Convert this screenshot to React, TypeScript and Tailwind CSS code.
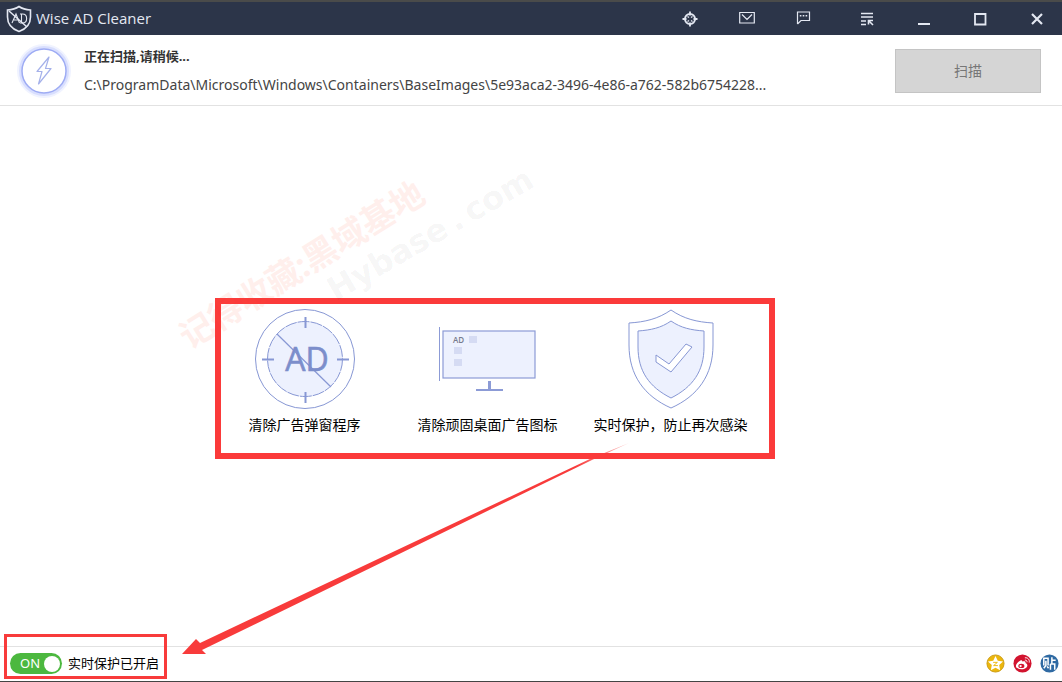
import React, { useState } from "react";

const cjk = "font-['Noto_Sans','Noto_Sans_CJK_SC',sans-serif]";

function ShieldLogo() {
  return (
    <svg viewBox="0 0 26 28" className="h-7 w-[26px]" fill="none" stroke="#e4e8f2" strokeWidth="1.6" aria-hidden="true">
      <path d="M13 1.5C9.500 4 5.500 4.800 1.500 5v7c0 7 4.500 12 11.500 14.500C20 24 24.500 19 24.500 12V5C20.500 4.800 16.500 4 13 1.500Z" />
      <path d="M3 6l18 16" strokeWidth="1.500" />
      <path d="M6 18l4-9 3.500 9M8 15h4.500M15.500 9v9M14 9h2.500c5.500 0 5.500 9 0 9H14" strokeWidth="1.100" />
    </svg>
  );
}

function ScanBadge() {
  return (
    <svg viewBox="0 0 56 56" className="h-14 w-14 shrink-0" fill="none" aria-hidden="true">
      <circle cx="28" cy="28" r="25.500" stroke="#f0f3ff" strokeWidth="3" />
      <circle cx="28" cy="28" r="23.500" stroke="#d9dffe" strokeWidth="3" />
      <circle cx="28" cy="28" r="22" fill="#fff" stroke="#9eacf4" strokeWidth="1.500" />
      <path d="M33 14L21 28.500h5L22.500 41 35 25.500h-5.500L33 14Z" stroke="#a5b1ea" strokeWidth="1.200" strokeLinejoin="round" />
    </svg>
  );
}

const titleIcons: { name: string; width: string; art: React.ReactNode }[] = [
  {
    name: "皮肤",
    width: "w-[57px]",
    art: (
      <>
        <circle cx="8" cy="8" r="5" strokeWidth="2" />
        <path d="M5.500 5.500l1.500 1M10.500 5.500l-1.500 1M5.500 10.500l1.500-1M10.500 10.500l-1.500-1" strokeWidth="1.400" />
        <path d="M8 0.500v4M8 11.500v4M0.500 8h4M11.500 8h4" strokeWidth="1.800" />
      </>
    ),
  },
  {
    name: "邮件",
    width: "w-[57px]",
    art: <path d="M0.700 1.500h14.600v10.500H0.700ZM3 3.500l5 5 5-5" />,
  },
  {
    name: "反馈",
    width: "w-[57px]",
    art: (
      <>
        <path d="M1.500 13V1h12v8.500H5L1.500 13" />
        <path d="M3.800 4.800h1.600M6.700 4.800h1.600M9.600 4.800h1.600" strokeWidth="1.600" />
      </>
    ),
  },
  {
    name: "菜单",
    width: "w-[70px]",
    art: (
      <>
        <path d="M2 2.500h12M2 6h12M2 10h5M2 13.500h5" strokeWidth="1.400" />
        <path d="M9.500 13.500V9.500H14M10 10l4 4" strokeWidth="1.600" />
      </>
    ),
  },
  { name: "最小化", width: "w-[44px]", art: <path d="M2 13h12" strokeWidth="2" /> },
  { name: "最大化", width: "w-[68px]", art: <path d="M3 3h10.500v10.500H3Z" strokeWidth="1.800" /> },
  { name: "关闭", width: "w-[46px]", art: <path d="M3 3l10 10M13 3L3 13" strokeWidth="2.200" /> },
];

function TargetArt() {
  return (
    <svg viewBox="0 0 100 100" className="h-[100px] w-[100px]" fill="none" stroke="#8797d4" aria-hidden="true">
      <circle cx="50" cy="50" r="49.500" />
      <circle cx="50" cy="50" r="37.500" fill="#edf1fe" strokeDasharray="12 1" />
      <path d="M22 25l54 53" strokeWidth="1.200" />
      <path d="M50.500 8v11M50.500 83v11M7 50.500h12M82 50.500h12" strokeWidth="2" />
      <text x="52" y="62" textAnchor="middle" fontSize="32" fill="#7c8ecb" stroke="#7c8ecb" strokeWidth="0.600" className="font-['Open_Sans',sans-serif]">AD</text>
    </svg>
  );
}

function MonitorArt() {
  return (
    <svg viewBox="0 0 100 100" className="h-[100px] w-[100px]" fill="none" stroke="#8c9bd6" aria-hidden="true">
      <path d="M1.500 18v54" />
      <rect x="5" y="22" width="92" height="47" fill="#edf1fe" strokeWidth="1.200" />
      <path d="M51.500 72v9" strokeWidth="3" />
      <path d="M38 81h27" strokeWidth="2" />
      <path d="M31 27h8v7h-8ZM16 38h8v7h-8ZM16 50h8v7h-8Z" fill="#d5dbf3" stroke="none" />
      <text x="15" y="34" fontSize="8" fontWeight="600" fill="#777b8d" stroke="none" className="font-['Open_Sans',sans-serif]">AD</text>
    </svg>
  );
}

function ShieldArt() {
  return (
    <svg viewBox="0 0 100 100" className="h-[100px] w-[100px]" fill="none" stroke="#8797d4" aria-hidden="true">
      <path d="M50 1C37 10 24 13 8 14v22c0 30 15 51 42 63 27-12 42-33 42-63V14C76 13 63 10 50 1Z" />
      <path d="M50 12C40 19 30 21 17 22v16c0 24 11 40 33 51 22-11 33-27 33-51V22C70 21 60 19 50 12Z" fill="#edf1fe" />
      <path d="M35 46v7l15 10 21-25-6-3-17 20-13-9Z" fill="#fff" strokeLinejoin="round" />
    </svg>
  );
}

const features = [
  { label: "清除广告弹窗程序", art: <TargetArt /> },
  { label: "清除顽固桌面广告图标", art: <MonitorArt /> },
  { label: "实时保护，防止再次感染", art: <ShieldArt /> },
];

const shares = [
  {
    name: "QQ空间",
    art: (
      <>
        <circle cx="10" cy="10" r="9" fill="#ecb70d" stroke="#c99a13" strokeWidth="1" />
        <path d="M10 2.200l2.400 5 5.500.7-4 3.800 1 5.500L10 14.500l-4.900 2.700 1-5.500-4-3.800 5.500-.7Z" fill="#fff" />
        <path d="M7.500 8.800h4.500L8 12.200h4.500" fill="none" stroke="#ecb70d" />
      </>
    ),
  },
  {
    name: "微博",
    art: (
      <>
        <circle cx="10" cy="10" r="9.500" fill="#d2142f" />
        <path d="M7.500 7c1.500-.8 2.500-.2 2.200 1 2.500-.9 4 0 3.400 1.500 4 1.600 1.700 6.500-4 6.500-8 0-7.500-5.500-1.600-9Z" fill="#fff" />
        <ellipse cx="8.800" cy="12.500" rx="3.200" ry="2.300" fill="#d2142f" />
        <circle cx="8" cy="12.700" r="1.200" fill="#fff" />
        <path d="M12.500 6.500c1.500-.3 2.500.7 2.200 2.200M12.500 4c3.200-.4 5.200 2 4.600 5" fill="none" stroke="#fff" />
      </>
    ),
  },
  {
    name: "贴吧",
    art: (
      <>
        <circle cx="10" cy="10" r="9.500" fill="#2f6aa3" />
        <path d="M4 12V4.500h4.500V12M6.200 7v5l-2.200 3M7.500 13l1.500 2M12.500 3.500v7M12.500 6.500h4M11 10.500h4.500v6M11 10.500v6" fill="none" stroke="#fff" strokeWidth="1.600" />
      </>
    ),
  },
];

export default function App() {
  const [on, setOn] = useState(true);
  return (
    <div className={`relative flex min-h-screen flex-col overflow-hidden bg-white text-sm text-black ${cjk}`}>
      <header className="flex h-[35px] items-center border-t-2 border-[#4a4b4a] bg-[#2c3549] pr-[2px] pl-[6px] text-[#e4e8f2]">
        <ShieldLogo />
        <h1 className="ml-1 flex-1 font-['Open_Sans',sans-serif] text-[15px]">Wise AD Cleaner</h1>
        <nav className="flex">
          {titleIcons.map((i) => (
            <button key={i.name} aria-label={i.name} className={`flex h-8 items-center justify-center ${i.width}`}>
              <svg viewBox="0 0 16 16" className="h-4 w-4" fill="none" stroke="currentColor" strokeWidth="1.200" aria-hidden="true">
                {i.art}
              </svg>
            </button>
          ))}
        </nav>
      </header>

      <section className="flex h-[71px] items-center border-b border-[#e2e2e2] pt-[2px] pr-[21px] pl-4 text-[#444]">
        <ScanBadge />
        <div className="ml-3 min-w-0 flex-1">
          <p className="text-[13px] leading-7 font-bold text-[#333]">正在扫描,请稍候...</p>
          <p className="truncate text-sm leading-[30px]">
            C:\ProgramData\Microsoft\Windows\Containers\BaseImages\5e93aca2-3496-4e86-a762-582b6754228...
          </p>
        </div>
        <button className="h-11 w-[146px] border border-[#c4c4c4] bg-[#d5d5d5] text-sm text-[#777]">扫描</button>
      </section>

      <main className="flex-1 pt-[203px] pl-[213px]">
        <div className="relative w-[549px]">
          <div className="pointer-events-none absolute -top-[11px] left-[2px] h-[161px] w-[560px] border-[6px] border-[#fb3a3a]" />
          <ul className="grid grid-cols-3">
            {features.map((f) => (
              <li key={f.label} className="flex flex-col items-center gap-1">
                {f.art}
                <span className="text-sm leading-6 whitespace-nowrap">{f.label}</span>
              </li>
            ))}
          </ul>
        </div>
      </main>

      <footer className="flex h-9 items-center border-t border-b border-t-[#e2e2e2] border-b-[#444] pr-[3px] pb-px pl-[10px]">
        <div className="relative flex items-center">
          <div className="pointer-events-none absolute -top-[19px] -left-[6px] h-[45px] w-[163px] border-[3px] border-[#f83b3b]" />
          <label className="flex items-center gap-[6px] text-[13px]">
            <input type="checkbox" checked={on} onChange={() => setOn(!on)} className="sr-only" />
            <span className="flex h-[21px] w-[52px] items-center justify-between rounded-full bg-[#4cb83f] pr-[2px] pl-[10px] text-white">
              ON
              <span className="h-4 w-4 rounded-full bg-white" />
            </span>
            <span className="whitespace-nowrap">实时保护已开启</span>
          </label>
        </div>
        <div className="ml-auto flex gap-2">
          {shares.map((s) => (
            <a key={s.name} href="#" aria-label={s.name}>
              <svg viewBox="0 0 20 20" className="h-[19px] w-[19px]" aria-hidden="true">{s.art}</svg>
            </a>
          ))}
        </div>
      </footer>

      <div className="pointer-events-none absolute top-[319px] left-[182px] origin-left -rotate-[32deg] text-[34px] leading-10 font-bold whitespace-nowrap text-[#ff5a3c]/10">
        记得收藏:黑域基地
      </div>
      <div className="pointer-events-none absolute top-[272px] left-[330px] origin-left -rotate-[30deg] font-['DejaVu_Sans',sans-serif] text-[32px] leading-10 font-bold whitespace-nowrap text-black/5">
        Hybase<span className="mx-[6px]">.</span>com
      </div>
      <svg viewBox="0 0 450 216" className="pointer-events-none absolute top-[442px] left-[181px] h-[216px] w-[450px]" aria-hidden="true">
        <defs>
          <linearGradient id="fade" x1="1" y1="0" x2="0" y2="0">
            <stop offset="0" stopColor="#f83b3b" stopOpacity="0.300" />
            <stop offset="0.120" stopColor="#f83b3b" />
          </linearGradient>
        </defs>
        <path d="M448 1L411 16 19 201 15 197 1 212 25 212 21 208 411 18Z" fill="url(#fade)" />
      </svg>
    </div>
  );
}
